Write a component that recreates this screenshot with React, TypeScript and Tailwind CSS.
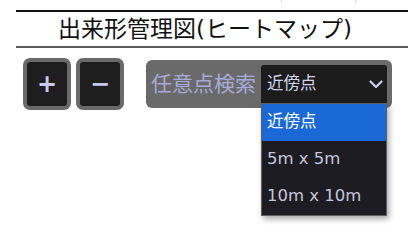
import { useState } from 'react';

const font = { fontFamily: '"DejaVu Sans", "Noto Sans CJK JP", sans-serif' };

const options = ['近傍点', '5m x 5m', '10m x 10m'];

export default function App() {
  const [selected, setSelected] = useState(0);

  return (
    <div className="relative w-[417px] h-[228px] bg-white overflow-hidden" style={font}>
      {/* edge of the table above */}
      <div className="ml-[281px] w-[75px] h-[3px] border-x border-[#dcdcdc]" />

      <div className="mt-[7px] ml-[16px] w-[392px] h-[38px] border-t-2 border-b-2 border-t-[#111] border-b-[#5c5c5c] flex items-center pl-[42px]">
        <h1 className="text-[23px] leading-none text-[#111]">出来形管理図(ヒートマップ)</h1>
      </div>

      <div className="mt-[10px] ml-[23px] flex items-center">
        <ZoomButton label="+" />
        <ZoomButton label="−" className="ml-[5px]" />

        <div className="ml-[22px] flex items-center h-[48px] w-[246px] rounded-[6px] bg-[#6a6a6a] pl-[5px] pr-[5px]">
          <span className="text-[21px] leading-none text-[#a9a9d9] whitespace-nowrap">任意点検索</span>
          <div className="relative ml-auto">
            <div className="flex items-center justify-between w-[126px] h-[38px] rounded-t-[3px] bg-[#1c1c1c] pl-[6px] pr-[4px]">
              <span className="text-[16.5px] text-[#d4d4f2]">{options[selected]}</span>
              <svg width="14" height="9" viewBox="0 0 14 9" fill="none">
                <path d="M1.5 1.5 L7 7 L12.5 1.5" stroke="#cfcfef" strokeWidth="2.2" strokeLinecap="round" strokeLinejoin="round" />
              </svg>
            </div>
            <ul className="absolute left-0 top-[38px] w-[126px] bg-[#1c1c22] border border-[#5e5e5e] shadow-[2px_3px_6px_rgba(0,0,0,0.35)] z-10">
              {options.map((opt, i) => (
                <li
                  key={opt}
                  onClick={() => setSelected(i)}
                  className={`h-[37px] flex items-center pl-[5px] text-[16.5px] cursor-pointer ${
                    i === selected ? 'bg-[#1a69d6] text-white' : 'text-[#c6c6dc]'
                  }`}
                >
                  {opt}
                </li>
              ))}
            </ul>
          </div>
        </div>
      </div>
    </div>
  );
}

function ZoomButton({ label, className = '' }: { label: string; className?: string }) {
  return (
    <button
      className={`w-[48px] h-[52px] rounded-[7px] border-4 border-[#6a6a6a] bg-[#1e1e1e] flex items-center justify-center text-[24px] font-bold leading-none text-[#c9c9f0] ${className}`}
    >
      {label}
    </button>
  );
}
